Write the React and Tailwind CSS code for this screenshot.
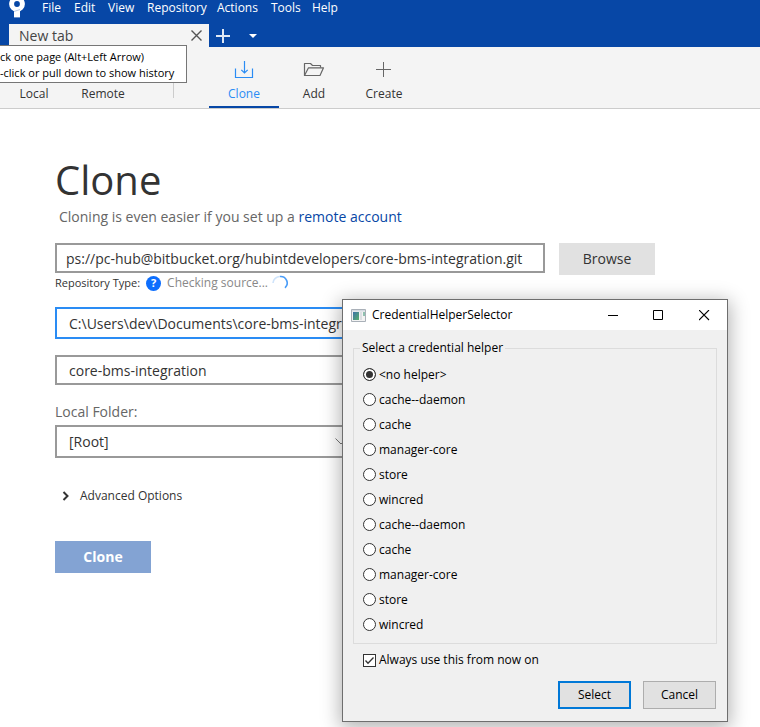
import { useState } from "react";

const menus = ["File", "Edit", "View", "Repository", "Actions", "Tools", "Help"];

const helpers = [
  "<no helper>",
  "cache--daemon",
  "cache",
  "manager-core",
  "store",
  "wincred",
  "cache--daemon",
  "cache",
  "manager-core",
  "store",
  "wincred",
];

function Logo() {
  return (
    <svg viewBox="0 0 16 18" className="h-[18px] w-4" aria-hidden="true">
      <circle cx="8" cy="4" r="5.400" fill="none" stroke="#fff" strokeWidth="5" />
      <path d="M5 9h6v8.400H5z" fill="#fff" />
      <path d="M5 11.500 11 9.500" stroke="#b9cbe8" strokeWidth="1" />
    </svg>
  );
}

function CloneIcon() {
  return (
    <svg viewBox="0 0 20 20" className="h-5 w-5" fill="none" stroke="currentColor" strokeWidth="1.200" aria-hidden="true">
      <path d="M1.500 9.500V18.500H18.500V9.500" />
      <path d="M10.500 2v12M7.300 10.800 10.500 14l3.200-3.200" />
    </svg>
  );
}

function FolderIcon() {
  return (
    <svg viewBox="0 0 22 20" className="h-5 w-[22px]" fill="none" stroke="currentColor" strokeWidth="1.200" strokeLinejoin="round" aria-hidden="true">
      <path d="M1.500 16.500V4.500H7.500L9.500 6.500H17.500V8.500" />
      <path d="M1.500 16.500 5.500 8.800H20.500L17 16.500Z" />
    </svg>
  );
}

function PlusIcon() {
  return (
    <svg viewBox="0 0 20 20" className="h-5 w-5" fill="none" stroke="currentColor" strokeWidth="1" aria-hidden="true">
      <path d="M9.500 3v15M2 10.500h15" />
    </svg>
  );
}

function ToolButton({ icon, label, active }) {
  return (
    <button
      type="button"
      className={
        active
          ? "flex w-[70px] flex-col items-center border-b-2 border-[#0747a6] pt-3 text-[#2a8cf4]"
          : "flex w-[70px] flex-col items-center border-b-2 border-transparent pt-3 text-[#666]"
      }
    >
      {icon}
      <span className={active ? "mt-[5px] text-xs leading-5" : "mt-[5px] text-xs leading-5 text-[#333]"}>{label}</span>
    </button>
  );
}

function Header() {
  return (
    <header className="relative">
      <div className="bg-[#0747a6]">
        <nav className="flex h-6 items-start pl-[9px] text-xs leading-4 text-white">
          <Logo />
          <div className="ml-[17px] grid grid-cols-[32px_34px_39px_70px_54px_41px_40px]">
            {menus.map((m) => (
              <button key={m} type="button" className="text-left">
                {m}
              </button>
            ))}
          </div>
        </nav>
        <div className="flex h-[23px] items-center pl-[9px]">
          <div className="flex h-full w-[200px] items-center justify-between bg-[#f4f4f4] pr-[7px] pl-[10px] text-sm text-[#444]">
            <span>New tab</span>
            <button type="button" aria-label="Close tab">
              <svg viewBox="0 0 11 11" className="h-[11px] w-[11px]" stroke="#555" strokeWidth="1.400" aria-hidden="true">
                <path d="M.5.500l10 10M10.500.500l-10 10" />
              </svg>
            </button>
          </div>
          <button type="button" aria-label="Add tab" className="ml-[7px]">
            <svg viewBox="0 0 14 14" className="h-[14px] w-[14px]" stroke="#dfe8f5" strokeWidth="2" aria-hidden="true">
              <path d="M7 0v14M0 7h14" />
            </svg>
          </button>
          <button type="button" aria-label="List tabs" className="ml-[19px]">
            <svg viewBox="0 0 8 4" className="h-1 w-2" fill="#fff" aria-hidden="true">
              <path d="M0 0h8L4 4z" />
            </svg>
          </button>
        </div>
      </div>
      <div className="flex h-[62px] items-stretch border-b border-[#ccc] bg-[#f4f4f4]">
        <div className="flex w-[173px] items-end pb-1 text-xs leading-5 text-[#333]">
          <button type="button" className="w-[68px]">Local</button>
          <button type="button" className="w-[70px]">Remote</button>
        </div>
        <div className="mt-2 mb-[10px] w-px bg-[#ccc]" />
        <div className="ml-[35px] flex">
          <ToolButton active icon={<CloneIcon />} label="Clone" />
          <ToolButton icon={<FolderIcon />} label="Add" />
          <ToolButton icon={<PlusIcon />} label="Create" />
        </div>
      </div>
      <div role="tooltip" className="absolute top-[45px] left-0 w-[187px] border border-l-0 border-[#767676] bg-white pt-[3px] pb-[1px] text-[11px] leading-4 whitespace-nowrap text-black">
        <div className="flex flex-col">
          <span>ck one page (Alt+Left Arrow)</span>
          <span>-click or pull down to show history</span>
        </div>
      </div>
    </header>
  );
}

function CloneForm() {
  return (
    <main className="px-[55px] pt-[47px] text-[#333]">
      <form className="w-full max-w-[600px]" onSubmit={(e) => e.preventDefault()}>
        <h1 className="text-[40px] leading-[48px]">Clone</h1>
        <p className="mt-px pl-1 text-sm leading-6 text-[#666]">
          Cloning is even easier if you set up a{" "}
          <a href="#remote" className="text-[#0747a6]">remote account</a>
        </p>
        <div className="mt-[14px] flex items-start gap-[14px]">
          <input
            aria-label="Source URL"
            defaultValue="ps://pc-hub@bitbucket.org/hubintdevelopers/core-bms-integration.git"
            className="h-[30px] min-w-0 flex-1 border-2 border-[#999] px-[9px] text-sm outline-none"
          />
          <button type="button" className="h-8 w-24 bg-[#e1e1e1] text-sm">Browse</button>
        </div>
        <div className="flex h-4 items-center text-xs leading-4">
          <span className="text-[11px]">Repository Type:</span>
          <span className="ml-[6px] flex h-[15px] w-[15px] items-center justify-center rounded-full bg-[#0d6efd] text-[11px] font-bold text-white">?</span>
          <span className="ml-[6px] text-[#888]">Checking source...</span>
          <svg viewBox="0 0 16 16" className="ml-1 h-4 w-4" fill="none" strokeWidth="1.600" aria-hidden="true">
            <path d="M1 8A7 7 0 0 1 8 1.500" stroke="#cfe4fb" />
            <path d="M8 1.500A6.500 6.500 0 0 1 13 12.800" stroke="#4a9df8" />
          </svg>
        </div>
        <div className="mt-4 flex max-w-[490px] flex-col">
          <input
            aria-label="Destination path"
            defaultValue="C:\Users\dev\Documents\core-bms-integration"
            className="h-8 border-2 border-[#2a8cf4] px-3 text-sm outline-none"
          />
          <input
            aria-label="Name"
            defaultValue="core-bms-integration"
            className="mt-4 h-[30px] border-2 border-[#999] px-3 text-sm outline-none"
          />
        </div>
        <label htmlFor="folder" className="mt-[15px] block text-sm leading-6 text-[#666]">Local Folder:</label>
        <div className="relative mt-px w-[300px]">
          <select id="folder" className="h-[33px] w-full appearance-none border-2 border-[#999] bg-white px-3 text-sm outline-none">
            <option>[Root]</option>
          </select>
          <svg viewBox="0 0 12 7" className="pointer-events-none absolute top-[13px] right-2 h-[7px] w-3" fill="none" stroke="#777" aria-hidden="true">
            <path d="M.5.500 6 6 11.500.500" />
          </svg>
        </div>
        <button type="button" className="mt-7 flex items-center gap-[10px] pl-[7px] text-xs leading-5">
          <svg viewBox="0 0 8 10" className="h-[10px] w-2" fill="none" stroke="#333" strokeWidth="2" aria-hidden="true">
            <path d="M1.500 1 5.500 5 1.500 9" />
          </svg>
          Advanced Options
        </button>
        <button type="submit" className="mt-[35px] h-8 w-24 bg-[#83a3d3] text-sm font-bold text-white">Clone</button>
      </form>
    </main>
  );
}

function CredentialDialog() {
  const [picked, setPicked] = useState(0);
  const [always, setAlways] = useState(true);
  return (
    <div
      role="dialog"
      aria-labelledby="dialog-title"
      className="absolute top-[299px] left-[342px] w-[386px] border border-[#6e6e6e] bg-[#f0f0f0] text-xs text-black shadow-[0_4px_18px_2px_rgba(0,0,0,0.3)]"
    >
      <div className="flex h-[30px] items-center bg-white pl-2">
        <svg viewBox="0 0 15 13" className="h-[13px] w-[15px]" aria-hidden="true">
          <defs>
            <linearGradient id="pane" x1="0" y1="0" x2="1" y2="1">
              <stop offset="0" stopColor="#3d72a8" />
              <stop offset="1" stopColor="#58b06c" />
            </linearGradient>
          </defs>
          <path d="M.5.500h14v12H.5z" fill="#f3f3f3" stroke="#a9b0b8" />
          <path d="M1 1h13v1.500H1z" fill="#d5dbe2" />
          <path d="M2 3h6v8H2z" fill="url(#pane)" />
          <path d="M9 3h2v8H9z" fill="#dcdfe3" />
          <path d="M12 3h2v4h-2z" fill="#8fc0b0" />
        </svg>
        <h2 id="dialog-title" className="ml-[6px] flex-1">CredentialHelperSelector</h2>
        <button type="button" aria-label="Minimize" className="flex w-[45px] justify-center">
          <svg viewBox="0 0 11 11" className="h-[11px] w-[11px]" stroke="#000" aria-hidden="true">
            <path d="M0 5.500h10" />
          </svg>
        </button>
        <button type="button" aria-label="Maximize" className="flex w-[45px] justify-center">
          <svg viewBox="0 0 11 11" className="h-[11px] w-[11px]" fill="none" stroke="#000" aria-hidden="true">
            <path d="M.5.500h9v9h-9z" />
          </svg>
        </button>
        <button type="button" aria-label="Close" className="flex w-[46px] justify-center">
          <svg viewBox="0 0 11 11" className="h-[11px] w-[11px]" stroke="#000" strokeWidth="1.100" aria-hidden="true">
            <path d="M0 0l10 10M10 0l-10 10" />
          </svg>
        </button>
      </div>
      <div className="px-[10px] pt-[10px] pb-3">
        <fieldset className="border border-[#dcdcdc] pb-[6px] pl-[9px]">
          <legend className="-ml-[3px] px-[2px] leading-4">Select a credential helper</legend>
          <div className="flex flex-col pt-[6px]">
            {helpers.map((name, i) => (
              <label key={i} className="flex h-[25px] items-center gap-[3px]">
                <input
                  type="radio"
                  name="helper"
                  checked={picked === i}
                  onChange={() => setPicked(i)}
                  className="h-[13px] w-[13px] appearance-none rounded-full border border-[#333] bg-white checked:bg-[#333] checked:shadow-[inset_0_0_0_2px_#fff]"
                />
                {name}
              </label>
            ))}
          </div>
        </fieldset>
        <label className="mt-[6px] ml-[10px] flex h-5 items-center gap-[3px]">
          <span className="relative flex">
            <input
              type="checkbox"
              checked={always}
              onChange={() => setAlways(!always)}
              className="peer h-[13px] w-[13px] appearance-none border border-[#333] bg-white"
            />
            <svg viewBox="0 0 13 13" className="pointer-events-none absolute inset-0 hidden h-[13px] w-[13px] peer-checked:block" fill="none" stroke="#333" strokeWidth="1.300" aria-hidden="true">
              <path d="M2.500 6.500 5 9.200 10.500 3.500" />
            </svg>
          </span>
          Always use this from now on
        </label>
        <div className="mt-[11px] flex justify-end gap-3 pr-[1px]">
          <button type="button" className="h-7 w-[73px] border-2 border-[#0078d7] bg-[#e1e1e1]">Select</button>
          <button type="button" className="h-7 w-[73px] border border-[#adadad] bg-[#e1e1e1]">Cancel</button>
        </div>
      </div>
    </div>
  );
}

export default function App() {
  return (
    <div className="relative min-h-screen overflow-hidden bg-white font-['Open_Sans','Noto_Sans',sans-serif]">
      <Header />
      <CloneForm />
      <CredentialDialog />
    </div>
  );
}
